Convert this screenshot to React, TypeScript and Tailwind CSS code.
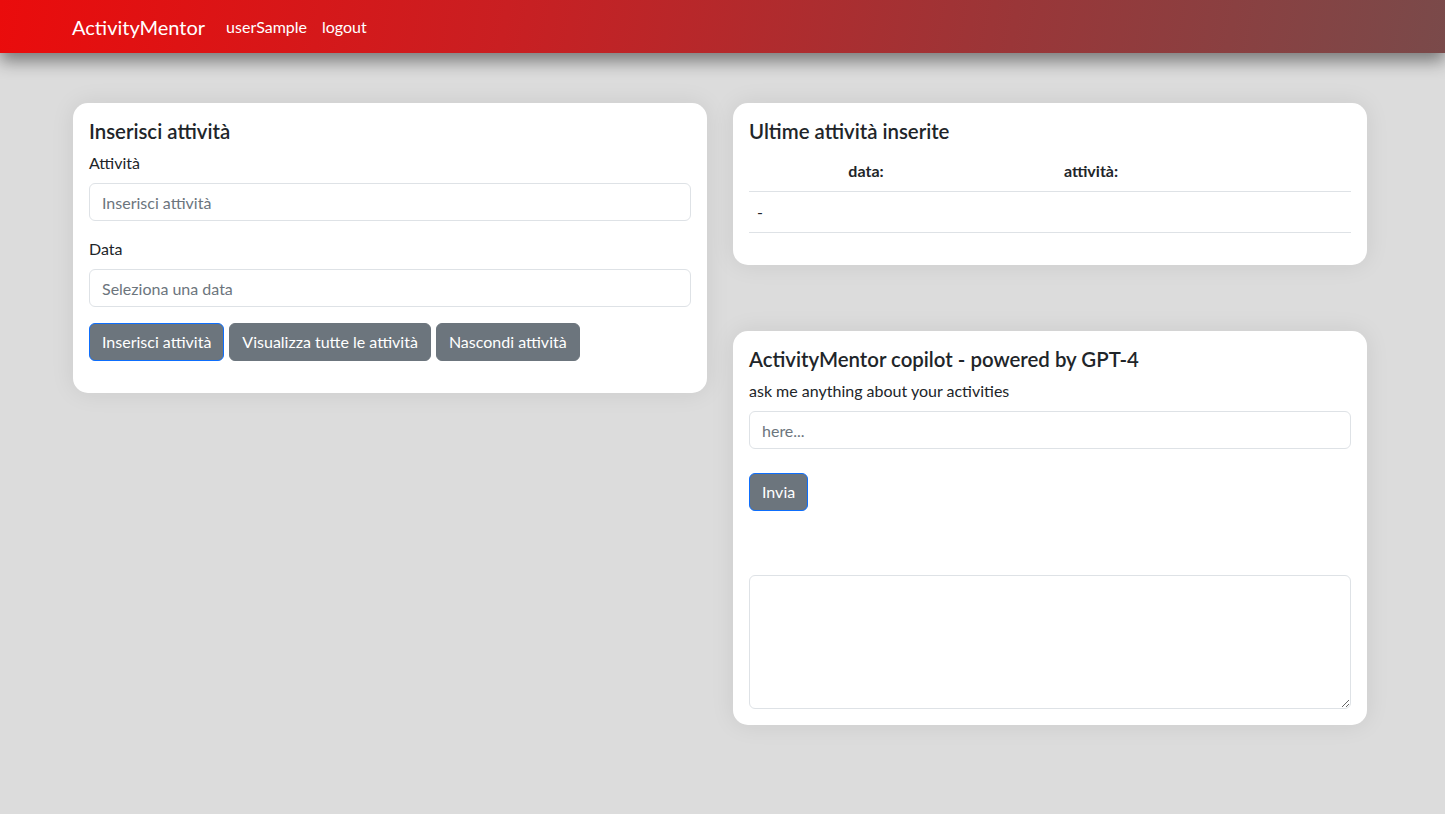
import { useState } from 'react'

const font = "font-['Segoe_UI','Lato','Open_Sans',sans-serif]"

function Btn({ children, focused }: { children: React.ReactNode; focused?: boolean }) {
  return (
    <button
      className={
        'h-[38px] rounded-[6px] bg-[#6c757d] px-3 text-[16px] text-white ' +
        (focused ? 'border border-[#0d6efd]' : 'border border-[#6c757d]')
      }
    >
      {children}
    </button>
  )
}

export default function App() {
  const [q, setQ] = useState('')

  return (
    <div className={`${font} min-h-[814px] bg-[#dcdcdc] text-[#212529]`}>
      {/* navbar */}
      <nav className="relative z-10 flex h-[53px] items-center bg-[linear-gradient(100deg,#ea0c0c_0%,#c91f22_35%,#9a3638_70%,#7a4a4a_100%)] pl-[72px] shadow-[0_8px_16px_rgba(0,0,0,0.45)]">
        <span className="text-[20px] text-white">ActivityMentor</span>
        <a className="ml-[21px] text-[16px] text-white">userSample</a>
        <a className="ml-[15px] text-[16px] text-white">logout</a>
      </nav>

      <main className="flex gap-[26px] pl-[73px] pt-[50px]">
        {/* left column */}
        <section className="w-[634px] self-start rounded-[15px] bg-white px-4 pb-8 pt-4 shadow-[0_0_24px_rgba(0,0,0,0.08)]">
          <h2 className="mb-2 text-[20.4px] font-semibold leading-6">Inserisci attività</h2>
          <label className="block text-[16px] leading-6">Attività</label>
          <input
            className="mt-2 block h-[38px] w-full rounded-[6px] border border-[#dee2e6] px-3 text-[16px] placeholder:text-[#6c757d]"
            placeholder="Inserisci attività"
          />
          <label className="mt-4 block text-[16px] leading-6">Data</label>
          <input
            className="mt-2 block h-[38px] w-full rounded-[6px] border border-[#dee2e6] px-3 text-[16px] placeholder:text-[#6c757d]"
            placeholder="Seleziona una data"
          />
          <div className="mt-4 flex gap-[5px]">
            <Btn focused>Inserisci attività</Btn>
            <Btn>Visualizza tutte le attività</Btn>
            <Btn>Nascondi attività</Btn>
          </div>
        </section>

        {/* right column */}
        <div className="flex w-[634px] flex-col gap-[66px]">
          <section className="rounded-[15px] bg-white px-4 pb-8 pt-4 shadow-[0_0_24px_rgba(0,0,0,0.08)]">
            <h2 className="mb-2 text-[20.4px] font-semibold leading-6">Ultime attività inserite</h2>
            <div className="grid grid-cols-[234px_216px_1fr] border-b border-[#dee2e6] text-[16px] leading-6">
              <div className="py-2 text-center font-bold">data:</div>
              <div className="py-2 text-center font-bold">attività:</div>
              <div />
            </div>
            <div className="border-b border-[#dee2e6] px-2 py-2 text-[16px] leading-6">-</div>
          </section>

          <section className="rounded-[15px] bg-white px-4 pb-4 pt-4 shadow-[0_0_24px_rgba(0,0,0,0.08)]">
            <h2 className="mb-2 text-[20.4px] font-semibold leading-6">ActivityMentor copilot - powered by GPT-4</h2>
            <p className="text-[16px] leading-6">ask me anything about your activities</p>
            <input
              value={q}
              onChange={e => setQ(e.target.value)}
              className="mt-2 block h-[38px] w-full rounded-[6px] border border-[#dee2e6] px-3 text-[16px] placeholder:text-[#6c757d]"
              placeholder="here..."
            />
            <div className="mt-6 flex">
              <Btn focused>Invia</Btn>
            </div>
            <textarea className="mt-16 block h-[134px] w-full rounded-[6px] border border-[#dee2e6] px-3 py-2 text-[16px]" />
          </section>
        </div>
      </main>
    </div>
  )
}
